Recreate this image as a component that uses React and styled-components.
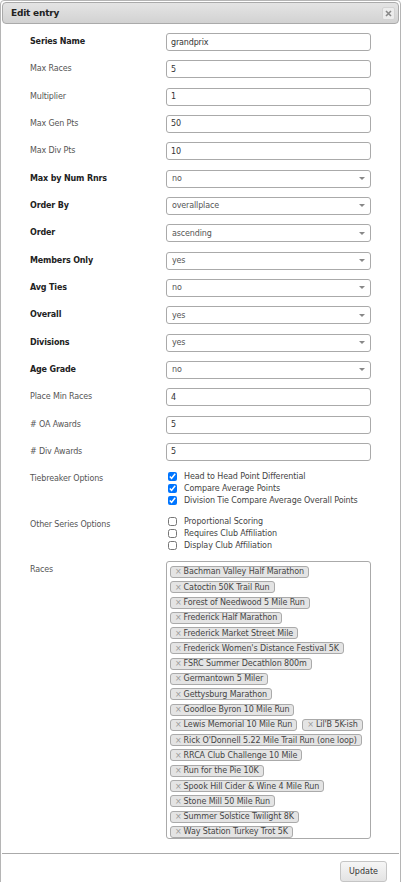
import React from "react";
import styled, { createGlobalStyle } from "styled-components";

const FONT = "'DejaVu Sans', Verdana, sans-serif";

const GlobalStyle = createGlobalStyle`
  html, body {
    margin: 0;
    padding: 0;
    background: #ffffff;
  }
  body {
    font-family: ${FONT};
    overflow: hidden;
  }
  * {
    box-sizing: border-box;
  }
`;

const Dialog = styled.div`
  width: 401px;
  height: 900px;
  border: 1px solid #b5b5b5;
  border-radius: 4px;
  padding: 1px;
  background: #fff;
`;

const TitleBar = styled.div`
  height: 22px;
  display: flex;
  align-items: center;
  justify-content: space-between;
  padding: 0 3px 0 8px;
  border: 1px solid #aaaaaa;
  border-radius: 4px;
  background: linear-gradient(#e4e4e4, #d2d2d2);
`;

const Title = styled.div`
  font-size: 9px;
  font-weight: 700;
  letter-spacing: -0.2px;
  color: #222;
`;

const CloseButton = styled.div`
  width: 13px;
  height: 13px;
  display: flex;
  align-items: center;
  justify-content: center;
  border: 1px solid #d3d3d3;
  border-radius: 2px;
  background: #ececec;
`;

const Form = styled.div`
  display: grid;
  grid-template-columns: 136px 205px;
  row-gap: 9.33px;
  padding: 9px 0 0 28px;
`;

const Label = styled.div`
  line-height: 18px;
  font-size: 8px;
  letter-spacing: -0.15px;
  font-weight: ${(p) => (p.bold ? 700 : 400)};
  color: ${(p) => (p.bold ? "#222" : "#555")};
  white-space: nowrap;
`;

const TextBox = styled.div`
  height: 18px;
  display: flex;
  align-items: center;
  padding: 0 4px;
  border: 1px solid #aaa;
  border-radius: 3px;
  font-size: 8px;
  letter-spacing: -0.15px;
  color: #333;
`;

const SelectBox = styled(TextBox)`
  justify-content: space-between;
  padding: 0 5px 0 5px;
  color: #555;
`;

const Arrow = styled.span`
  width: 0;
  height: 0;
  border-style: solid;
  border-width: 3px 3px 0 3px;
  border-color: #888 transparent transparent transparent;
`;

const CheckList = styled.div`
  display: flex;
  flex-direction: column;
`;

const CheckRow = styled.label`
  display: flex;
  align-items: center;
  height: 12px;
  gap: 7px;
  padding-left: 2px;
  font-size: 8px;
  letter-spacing: -0.1px;
  color: #444;
`;

const Check = styled.input`
  width: 9px;
  height: 9px;
  margin: 0;
`;

const TagBox = styled.div`
  height: 278px;
  display: flex;
  flex-wrap: wrap;
  align-content: flex-start;
  column-gap: 5px;
  row-gap: 3.3px;
  padding: 4px 3px;
  border: 1px solid #aaa;
  border-radius: 3px;
`;

const Tag = styled.span`
  height: 12px;
  display: inline-flex;
  align-items: center;
  gap: 2px;
  padding: 0 4px 0 4px;
  border: 1px solid #aaa;
  border-radius: 3px;
  background: #e4e4e4;
  font-size: 8px;
  letter-spacing: -0.1px;
  color: #444;
  white-space: nowrap;
`;

const TagRemove = styled.span`
  color: #999;
  font-size: 8px;
`;

const ButtonPane = styled.div`
  margin-top: 14px;
  border-top: 1px solid #aaa;
  display: flex;
  justify-content: flex-end;
  padding: 7px 12px 0 0;
`;

const Button = styled.button`
  width: 47px;
  height: 21px;
  border: 1px solid #c5c5c5;
  border-radius: 3px;
  background: linear-gradient(#f6f6f6, #e3e3e3);
  font-family: ${FONT};
  font-size: 8px;
  color: #333;
  padding: 0;
`;

const fields = [
  { label: "Series Name", bold: true, kind: "text", value: "grandprix" },
  { label: "Max Races", kind: "text", value: "5" },
  { label: "Multiplier", kind: "text", value: "1" },
  { label: "Max Gen Pts", kind: "text", value: "50" },
  { label: "Max Div Pts", kind: "text", value: "10" },
  { label: "Max by Num Rnrs", bold: true, kind: "select", value: "no" },
  { label: "Order By", bold: true, kind: "select", value: "overallplace" },
  { label: "Order", bold: true, kind: "select", value: "ascending" },
  { label: "Members Only", bold: true, kind: "select", value: "yes" },
  { label: "Avg Ties", bold: true, kind: "select", value: "no" },
  { label: "Overall", bold: true, kind: "select", value: "yes" },
  { label: "Divisions", bold: true, kind: "select", value: "yes" },
  { label: "Age Grade", bold: true, kind: "select", value: "no" },
  { label: "Place Min Races", kind: "text", value: "4" },
  { label: "# OA Awards", kind: "text", value: "5" },
  { label: "# Div Awards", kind: "text", value: "5" },
  {
    label: "Tiebreaker Options",
    kind: "checks",
    options: [
      ["Head to Head Point Differential", true],
      ["Compare Average Points", true],
      ["Division Tie Compare Average Overall Points", true],
    ],
  },
  {
    label: "Other Series Options",
    kind: "checks",
    options: [
      ["Proportional Scoring", false],
      ["Requires Club Affiliation", false],
      ["Display Club Affiliation", false],
    ],
  },
];

const races = [
  "Bachman Valley Half Marathon",
  "Catoctin 50K Trail Run",
  "Forest of Needwood 5 Mile Run",
  "Frederick Half Marathon",
  "Frederick Market Street Mile",
  "Frederick Women's Distance Festival 5K",
  "FSRC Summer Decathlon 800m",
  "Germantown 5 Miler",
  "Gettysburg Marathon",
  "Goodloe Byron 10 Mile Run",
  "Lewis Memorial 10 Mile Run",
  "Lil'B 5K-ish",
  "Rick O'Donnell 5.22 Mile Trail Run (one loop)",
  "RRCA Club Challenge 10 Mile",
  "Run for the Pie 10K",
  "Spook Hill Cider & Wine 4 Mile Run",
  "Stone Mill 50 Mile Run",
  "Summer Solstice Twilight 8K",
  "Way Station Turkey Trot 5K",
];

const Control = ({ field }) => {
  if (field.kind === "select") {
    return (
      <SelectBox>
        <span>{field.value}</span>
        <Arrow />
      </SelectBox>
    );
  }
  if (field.kind === "checks") {
    return (
      <CheckList>
        {field.options.map(([text, on], i) => (
          <CheckRow key={i}>
            <Check type="checkbox" defaultChecked={on} />
            {text}
          </CheckRow>
        ))}
      </CheckList>
    );
  }
  return <TextBox>{field.value}</TextBox>;
};

const CloseIcon = () => (
  <svg width="7" height="7" viewBox="0 0 7 7">
    <path d="M1 1L6 6M6 1L1 6" stroke="#888" strokeWidth="1.6" />
  </svg>
);

const App = () => (
  <>
    <GlobalStyle />
    <Dialog>
      <TitleBar>
        <Title>Edit entry</Title>
        <CloseButton>
          <CloseIcon />
        </CloseButton>
      </TitleBar>
      <Form>
        {fields.map((f, i) => (
          <React.Fragment key={i}>
            <Label bold={f.bold}>{f.label}</Label>
            <Control field={f} />
          </React.Fragment>
        ))}
        <Label>Races</Label>
        <TagBox>
          {races.map((r, i) => (
            <Tag key={i}>
              <TagRemove>×</TagRemove>
              {r}
            </Tag>
          ))}
        </TagBox>
      </Form>
      <ButtonPane>
        <Button>Update</Button>
      </ButtonPane>
    </Dialog>
  </>
);

export default App;
